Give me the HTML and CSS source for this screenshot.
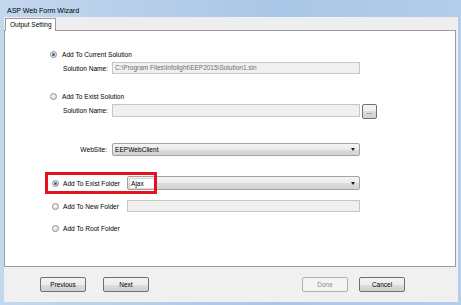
FILE: index.html
```html
<!DOCTYPE html>
<html lang="en">
<head>
  <meta charset="UTF-8">
  <title>ASP Web Form Wizard</title>
  <link rel="stylesheet" href="styles.css">
</head>
<body>
  <div class="window">
    <div class="titlebar">ASP Web Form Wizard</div>
    <div class="client">
      <div class="tabs"><div class="tab">Output Setting</div></div>

      <div class="panel">
        <div class="row opt first">
          <span class="radio checked"></span>
          <span class="label">Add To Current Solution</span>
        </div>
        <div class="row field-row r-sol1">
          <span class="caption">Solution Name:</span>
          <div class="field">C:\Program Files\Infolight\EEP2015\Solution1.sln</div>
        </div>

        <div class="row opt r-exist">
          <span class="radio"></span>
          <span class="label">Add To Exist Solution</span>
        </div>
        <div class="row field-row r-sol2">
          <span class="caption">Solution Name:</span>
          <div class="field tall"></div>
          <button class="btn btn-browse">...</button>
        </div>

        <div class="row field-row r-site">
          <span class="caption right">WebSite:</span>
          <div class="combo"><span>EEPWebClient</span><i class="arrow"></i></div>
        </div>

        <div class="row folder r-folder">
          <span class="radio checked"></span>
          <span class="label wide">Add To Exist Folder</span>
          <div class="combo short tall"><span class="sel">Ajax</span><i class="arrow"></i></div>
          <div class="highlight"></div>
        </div>
        <div class="row folder r-new">
          <span class="radio"></span>
          <span class="label wide">Add To New Folder</span>
          <div class="field short"></div>
        </div>
        <div class="row folder r-root">
          <span class="radio"></span>
          <span class="label wide">Add To Root Folder</span>
        </div>
      </div>

      <div class="footer">
        <button class="btn">Previous</button>
        <button class="btn next">Next</button>
        <button class="btn" disabled>Done</button>
        <button class="btn cancel">Cancel</button>
      </div>
    </div>
  </div>
</body>
</html>
```

FILE: styles.css
```css
* { margin: 0; padding: 0; box-sizing: border-box; font-family: 'Liberation Sans', Arial, sans-serif; }
body { background: #fff; }
.window { width: 461px; height: 305px; padding: 0 3px 3px 4px; background: linear-gradient(90deg, #c3d7ee, #aac6e6 60%, #b3cdea); display: flex; flex-direction: column; }
.titlebar { height: 17px; padding: 3px 0 0 3px; font-size: 7px; color: #000; display: flex; align-items: center; }
.client { flex: 1; background: #f0f0f0; display: flex; flex-direction: column; }
.tabs { height: 13px; display: flex; align-items: flex-end; background: #eeeeee; }
.tab { margin-left: 1px; width: 51px; height: 13px; background: #fff; border: 1px solid #9c9c9c; border-bottom: none; font-size: 6.5px; padding: 2px 0 0 4px; position: relative; top: 1px; }
.panel { height: 237px; margin-right: 2px; background: #fff; border: 1px solid #9c9c9c; padding-top: 18px; }
.row { display: flex; align-items: center; font-size: 6.6px; color: #000; }
.opt { height: 10px; padding-left: 45px; }
.r-exist { margin-top: 16px; }
.radio { flex: none; width: 7px; height: 7px; border-radius: 50%; border: 1px solid #909090; background: radial-gradient(circle at 40% 40%, #fafafa, #d2d2d2); display: flex; align-items: center; justify-content: center; }
.radio.checked::after { content: ""; width: 3px; height: 3px; border-radius: 50%; background: #2767ae; }
.label { margin-left: 5px; white-space: nowrap; }
.field-row { padding-left: 58px; align-items: flex-start; }
.r-sol1 { margin-top: 3px; }
.r-sol2 { margin-top: 3px; }
.r-site { margin-top: 24px; }
.caption { width: 44px; margin-right: 5px; line-height: 13px; white-space: nowrap; }
.caption.right { text-align: right; }
.field { width: 248px; height: 12px; border: 1px solid #c6c6c6; background: #f0f0f0; color: #6d6d6d; font-size: 6.5px; padding-left: 2px; line-height: 10px; white-space: nowrap; overflow: hidden; }
.field.tall { height: 13px; }
.field.short { width: 233px; }
.btn-browse { width: 15px !important; height: 15px; margin-left: 2px; color: #555; }
.combo { width: 248px; height: 13px; border: 1px solid #a3a3a3; border-radius: 2px; background: linear-gradient(#f4f4f4, #ebebeb 50%, #dddddd 50%, #d3d3d3); display: flex; align-items: center; justify-content: space-between; padding: 0 4px 0 2px; font-size: 6.6px; }
.combo.short { width: 233px; }
.combo.tall { height: 14px; }
.arrow { width: 0; height: 0; border-left: 2.5px solid transparent; border-right: 2.5px solid transparent; border-top: 3px solid #1e1e1e; }
.sel { background: #fff; border: 1px solid #d8d8d8; padding: 1px 3px 1px 1px; width: 27px; margin-left: -1px; }
.folder { padding-left: 47px; position: relative; }
.folder .label { margin-left: 4px; }
.label.wide { width: 59px; margin-right: 5px; }
.r-folder { margin-top: 20px; height: 14px; }
.r-new { margin-top: 10px; height: 12px; }
.r-root { margin-top: 11px; height: 10px; }
.highlight { position: absolute; left: 40px; top: -4px; width: 112px; height: 22px; border: 3px solid #e3121c; }
.footer { flex: 1; display: flex; align-items: flex-start; padding: 10px 53px 0 36px; }
.btn { width: 46px; height: 15px; border: 1px solid #707070; border-radius: 2px; background: linear-gradient(#f3f3f3, #ececec 50%, #dddddd 50%, #d0d0d0); font-size: 6.5px; color: #000; line-height: 12px; }
.next { margin-left: 17px; margin-right: auto; }
.cancel { margin-left: 11px; }
.btn:disabled { border-color: #adb2b5; background: #f4f4f4; color: #8d8d8d; }
```
